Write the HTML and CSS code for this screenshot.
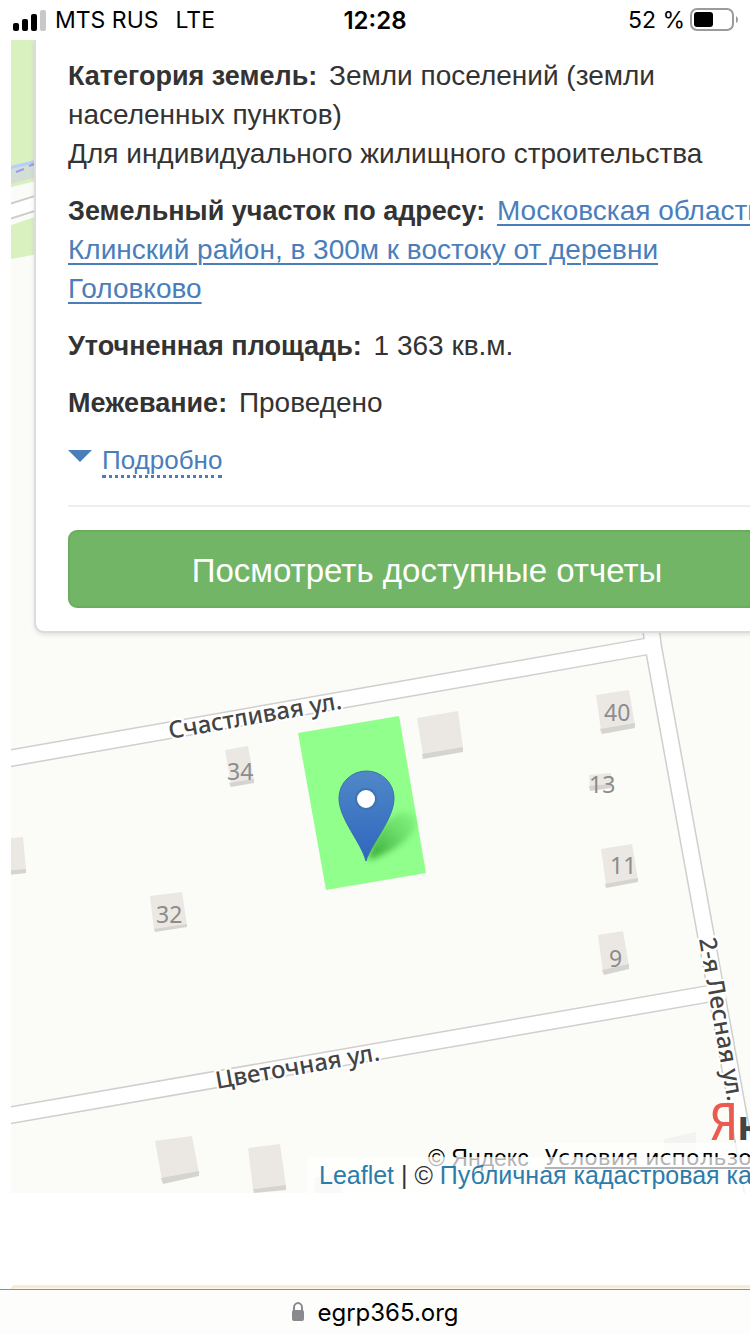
FILE: index.html
```html
<!DOCTYPE html>
<html lang="ru">
<head>
    <meta charset="UTF-8">
    <meta name="viewport" content="width=device-width, initial-scale=1.0">
    <title>egrp365.org</title>
    <link rel="stylesheet" href="styles.css">
</head>
<body>
    <header class="status-bar">
        <div class="status-left">
            <svg class="signal" viewBox="0 0 34 22" aria-hidden="true">
                <rect x="1" y="14" width="6" height="8" rx="2"/>
                <rect x="10" y="10" width="6" height="12" rx="2"/>
                <rect x="19" y="5" width="6" height="17" rx="2"/>
                <rect x="28" y="1" width="6" height="21" rx="2" fill="#c8c8c8"/>
            </svg>
            <span>MTS RUS</span>
            <span class="network">LTE</span>
        </div>
        <div class="status-time">12:28</div>
        <div class="status-right">
            <span>52 %</span>
            <svg class="battery" viewBox="0 0 48 24" aria-hidden="true">
                <rect x="1" y="1" width="42" height="21" rx="6" fill="none" stroke="#9b9b9b" stroke-width="2"/>
                <rect x="4" y="4" width="19" height="15" rx="3"/>
                <path d="M46 8 Q48 9 48 11.500 Q48 14 46 15Z" fill="#9b9b9b"/>
            </svg>
        </div>
    </header>

    <main class="map">
        <svg class="map-canvas" viewBox="11 40 739 1153" preserveAspectRatio="xMinYMin slice" role="img" aria-label="Карта">
            <defs>
                <linearGradient id="pinFill" x1="0" y1="0" x2="0" y2="1">
                    <stop offset="0" stop-color="#5088c8"/>
                    <stop offset="1" stop-color="#2f66be"/>
                </linearGradient>
                <linearGradient id="pinShadow" x1="0" y1="1" x2="1" y2="0">
                    <stop offset="0" stop-color="#1a8a1a" stop-opacity=".8"/>
                    <stop offset="1" stop-color="#3aba3a" stop-opacity=".1"/>
                </linearGradient>
                <filter id="soft"><feGaussianBlur stdDeviation="3"/></filter>
            </defs>

            <!-- forest and river -->
            <path d="M0 40H60V250L11 259H0Z" fill="#d9f1bf"/>
            <path d="M0 168L60 154V171L0 187Z" fill="#d3dfd4"/>
            <path d="M0 170L60 156" stroke="#b6cffa" stroke-width="3"/>
            <path d="M16 172L24 169M29 166L37 163" stroke="#9a9af0" stroke-width="2"/>
            <path d="M0 190L60 175V208L0 229Z" fill="#fbfcf7"/>
            <path d="M0 207L60 188V203L0 222Z" fill="#fff" stroke="#ccc" stroke-width="2"/>

            <!-- roads -->
            <g fill="none" stroke="#cfcfcf" stroke-width="18">
                <path d="M0 760L655 645"/>
                <path d="M0 1117L725 991"/>
                <path d="M650 620L653 645L755 1205"/>
            </g>
            <g fill="none" stroke="#fff" stroke-width="15">
                <path d="M0 760L655 645"/>
                <path d="M0 1117L725 991"/>
                <path d="M650 620L653 645L755 1205"/>
            </g>

            <!-- houses -->
            <g fill="#ebe8e3">
                <path d="M225 750L248 746L254 780L231 784Z"/>
                <path d="M417 718L458 711L463 748L423 755Z"/>
                <path d="M596 695L629 690L635 725L601 730Z"/>
                <path d="M589 775L611 773V787L590 790Z"/>
                <path d="M601 849L632 844L638 880L606 885Z"/>
                <path d="M598 935L623 931L629 966L603 972Z"/>
                <path d="M150 896L182 892L187 925L154 930Z"/>
                <path d="M0 839L23 837L26 870L0 872Z"/>
                <path d="M155 1141L192 1136L199 1173L162 1180Z"/>
                <path d="M248 1148L280 1144L286 1186L253 1189Z"/>
                <path d="M664 1139L696 1132V1160H664Z" fill="#f3f3f1"/>
                <path d="M315 1177L340 1175L343 1200H315Z" fill="#e9e9ef"/>
            </g>
            <g fill="#d6d4d0">
                <path d="M229 783L254 779V783L231 787Z"/>
                <path d="M422 754L463 747V752L423 759Z"/>
                <path d="M600 729L635 723V728L602 734Z"/>
                <path d="M589 786L611 784V788L590 791Z"/>
                <path d="M605 884L638 878V882L606 888Z"/>
                <path d="M602 970L629 964V969L604 975Z"/>
                <path d="M154 929L187 924V927L155 932Z"/>
                <path d="M0 871L26 869V873L0 876Z"/>
                <path d="M161 1178L199 1171V1176L163 1184Z"/>
                <path d="M253 1189L286 1185V1190L254 1193Z"/>
            </g>
            <g class="house-number">
                <text x="227" y="780">34</text>
                <text x="604" y="721">40</text>
                <text x="589" y="793">13</text>
                <text x="610" y="874">11</text>
                <text x="609" y="967">9</text>
                <text x="156" y="923">32</text>
            </g>

            <!-- street names -->
            <g class="street-name">
                <text transform="translate(170 739) rotate(-10)">Счастливая ул.</text>
                <text transform="translate(217 1089) rotate(-10)">Цветочная ул.</text>
                <text transform="translate(699 939) rotate(80)">2-я Лесная ул.</text>
            </g>

            <!-- selected plot with marker -->
            <path d="M298 733L399 716L426 873L326 890Z" fill="#90ff8b"/>
            <path d="M368 860Q376 822 402 812Q424 812 414 830Q400 850 368 860Z" fill="url(#pinShadow)" filter="url(#soft)"/>
            <path d="M366 861C361 842 339 819 339 798A27.500 27 0 0 1 394 798C394 819 372 842 366 861Z" fill="url(#pinFill)" stroke="#3a6fae" stroke-width="1"/>
            <circle cx="366" cy="799" r="10" fill="#fff" stroke="#4173b0" stroke-width="2"/>
        </svg>

        <section class="card">
            <p><b>Категория земель:</b> Земли поселений (земли населенных пунктов)<br>Для индивидуального жилищного строительства</p>
            <p><b>Земельный участок по адресу:</b> <a href="#">Московская область, Клинский район, в 300м к востоку от деревни Головково</a></p>
            <p><b>Уточненная площадь:</b> 1 363 кв.м.</p>
            <p><b>Межевание:</b> Проведено</p>
            <p class="more">
                <svg class="caret" viewBox="0 0 24 12" aria-hidden="true"><path d="M0 0H24L12 12Z"/></svg>
                <a href="#">Подробно</a>
            </p>
            <hr>
            <button class="report-btn" type="button">Посмотреть доступные отчеты</button>
        </section>

        <div class="yandex">
            <div class="yandex-logo"><span>Я</span>ндекс</div>
            <div class="yandex-terms"><span>© Яндекс</span><a href="#">Условия использования</a></div>
        </div>
        <div class="attribution"><a href="#">Leaflet</a> | © <a href="#">Публичная кадастровая карта</a></div>
    </main>

    <div class="notice"></div>

    <footer class="url-bar">
        <svg class="lock" viewBox="0 0 14 20" aria-hidden="true">
            <path d="M3 10V5.500A4 4.500 0 0 1 11 5.500V10" fill="none" stroke="#8a8a8e" stroke-width="2"/>
            <rect x="1" y="8" width="12" height="11" rx="2" fill="#8a8a8e"/>
        </svg>
        <span>egrp365.org</span>
    </footer>
</body>
</html>
```

FILE: styles.css
```css
* {
    box-sizing: border-box;
}
body {
    margin: 0;
    min-height: 100vh;
    display: flex;
    flex-direction: column;
    overflow-x: hidden;
    background-color: #fff;
    color: #333;
    font-family: "Liberation Sans", Arial, sans-serif;
    font-size: 28px;
    line-height: 39px;
}
p {
    margin: 0 0 18px;
}
b {
    margin-right: 4px;
    font-size: 27px;
    line-height: 38px;
}
a {
    color: #4a7ebb;
}

/* phone status bar */
.status-bar {
    display: grid;
    grid-template-columns: 1fr auto 1fr;
    align-items: center;
    height: 40px;
    padding: 0 12px;
    color: #000;
    font-family: Inter, sans-serif;
    font-size: 23px;
}
.status-left, .status-right {
    display: flex;
    align-items: center;
}
.status-right {
    justify-content: flex-end;
    gap: 5px;
}
.signal {
    width: 34px;
    height: 22px;
    margin-right: 9px;
}
.network {
    margin-left: 17px;
}
.status-time {
    font-size: 24px;
    font-weight: 600;
}
.battery {
    width: 48px;
    height: 24px;
}

/* map */
.map {
    flex: 1;
    position: relative;
    margin-left: 11px;
    overflow: hidden;
    background-color: #fbfcf7;
}
.map-canvas {
    position: absolute;
    top: 0;
    left: 0;
    width: 100%;
    height: 100%;
}
.house-number {
    fill: #8c8c8c;
    font-family: "Noto Sans", sans-serif;
    font-size: 23px;
}
.street-name {
    fill: #444;
    stroke: #fff;
    stroke-width: 4px;
    paint-order: stroke;
    font-family: "Noto Sans", sans-serif;
    font-size: 24px;
    font-weight: 500;
}

/* object info */
.card {
    position: relative;
    margin: 0 -70px 0 23px;
    padding: 16px 32px 23px;
    background-color: #fff;
    border: 2px solid #dcdcdc;
    border-top: none;
    border-radius: 0 0 10px 10px;
    box-shadow: 0 2px 4px rgba(0, 0, 0, 0.1);
}
.card a {
    text-decoration-thickness: 2px;
    text-underline-offset: 4px;
}
.more {
    display: flex;
    gap: 10px;
    padding-top: 5px;
    font-size: 26px;
}
.card .more a {
    text-decoration: none;
    line-height: 30px;
    border-bottom: 3px dotted #4a7ebb;
}
.caret {
    width: 24px;
    height: 12px;
    margin-top: 5px;
    fill: #4a7ebb;
}
hr {
    margin: 27px 0 23px;
    border: none;
    border-top: 2px solid #eee;
}
.report-btn {
    display: block;
    width: 100%;
    height: 78px;
    padding-top: 4px;
    color: #fff;
    background-color: #72b566;
    border: 2px solid #6aad5f;
    border-radius: 9px;
    font-family: inherit;
    font-size: 33px;
    cursor: pointer;
}

/* copyrights over the map */
.yandex {
    position: absolute;
    left: 417px;
    bottom: 20px;
    white-space: nowrap;
}
.yandex-logo {
    margin-left: 281px;
    color: #444;
    font-family: "Roboto Condensed", "Open Sans Condensed", "DejaVu Sans Condensed", sans-serif;
    font-size: 42px;
    font-weight: bold;
    line-height: 34px;
}
.yandex-logo span {
    color: #eb5a50;
    font-size: 52px;
    font-weight: normal;
}
.yandex-terms {
    display: flex;
    gap: 16px;
    color: #000;
    font-size: 23px;
    line-height: 30px;
}
.yandex-terms a {
    color: #000;
    background-color: rgba(255, 255, 255, 0.7);
    font-family: "DejaVu Sans", sans-serif;
    font-size: 22px;
}
.attribution {
    position: absolute;
    left: 296px;
    bottom: 0;
    padding: 0 12px;
    background-color: rgba(255, 255, 255, 0.7);
    font-size: 25px;
    line-height: 36px;
    white-space: nowrap;
}
.attribution a {
    color: #2b7cab;
    text-decoration: none;
}

.notice {
    height: 4px;
    margin: 92px 0 0 11px;
    background-color: #fcf8e8;
    border: 3px solid #f8ecd6;
    border-bottom: none;
    border-right: none;
    border-radius: 8px 0 0 0;
}

/* browser address */
.url-bar {
    display: flex;
    align-items: center;
    justify-content: center;
    gap: 12px;
    height: 45px;
    background-color: #fdfdfb;
    border-top: 1px solid #8e8e8e;
    color: #000;
    font-family: Inter, sans-serif;
    font-size: 24px;
}
.lock {
    width: 14px;
    height: 20px;
}
```
